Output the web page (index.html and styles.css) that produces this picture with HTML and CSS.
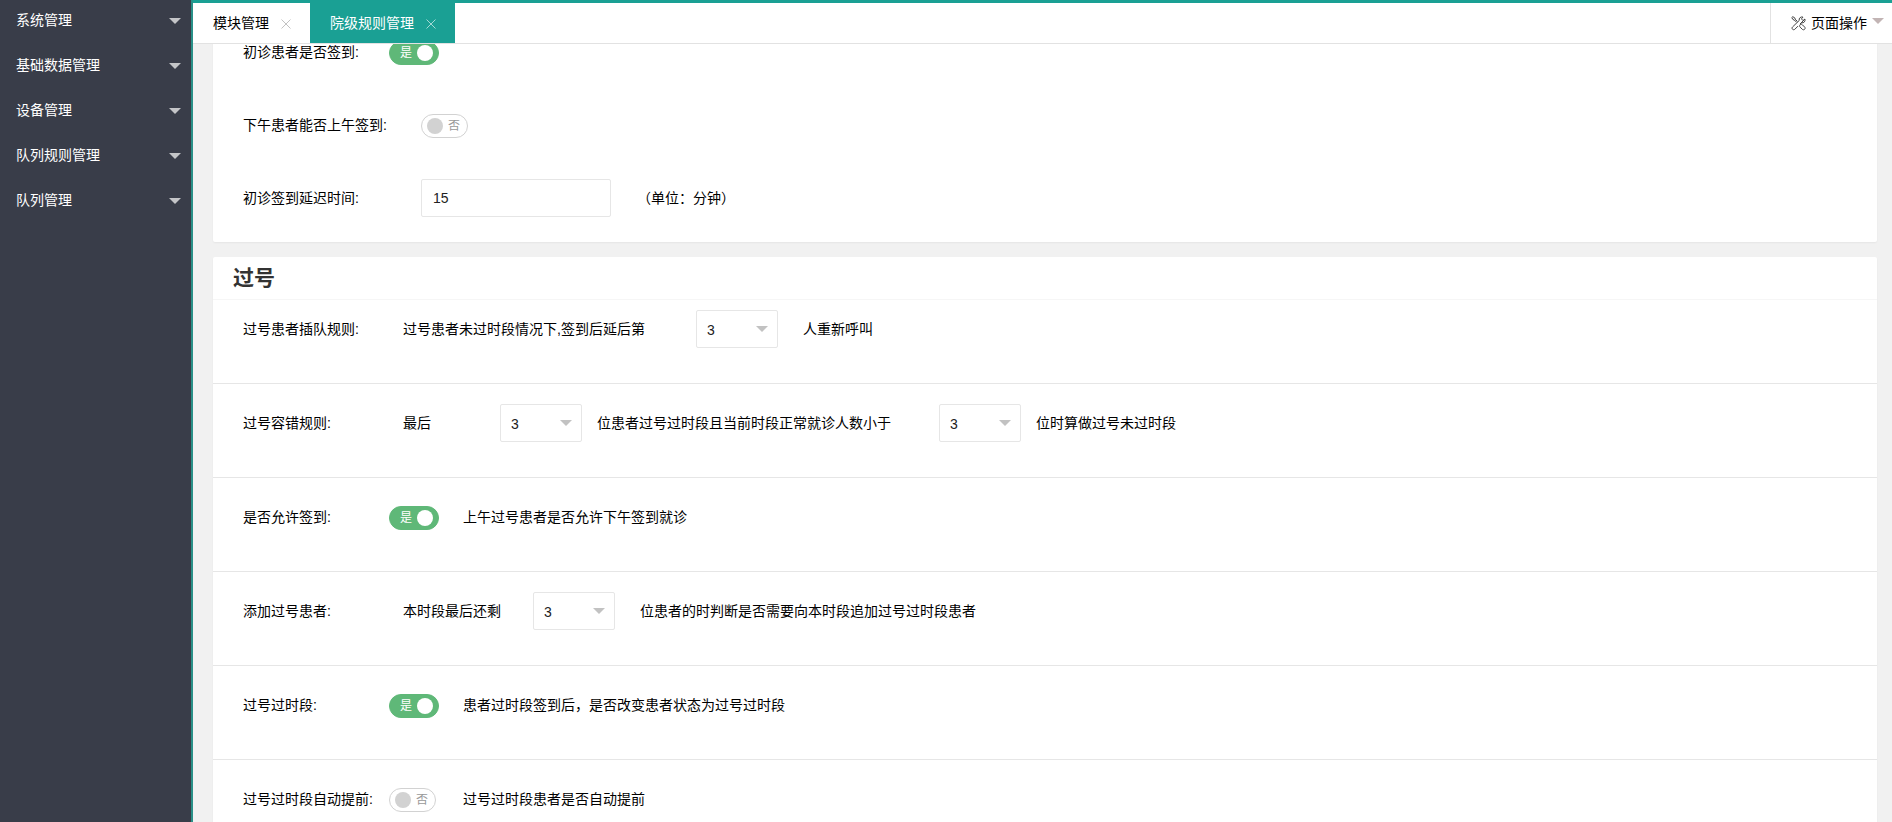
FILE: index.html
```html
<!DOCTYPE html>
<html lang="zh-CN">
<head>
<meta charset="utf-8">
<title>院级规则管理</title>
<link rel="stylesheet" href="styles.css">
</head>
<body>
<div class="app">
  <nav class="sidebar">
    <button class="nav-item" type="button">系统管理<span class="caret"></span></button>
    <button class="nav-item" type="button">基础数据管理<span class="caret"></span></button>
    <button class="nav-item" type="button">设备管理<span class="caret"></span></button>
    <button class="nav-item" type="button">队列规则管理<span class="caret"></span></button>
    <button class="nav-item" type="button">队列管理<span class="caret"></span></button>
  </nav>
  <div class="main">
    <header class="tabs">
      <div class="tab"><a href="#modules">模块管理</a><button class="close" type="button" aria-label="关闭模块管理"><svg width="10" height="10" viewBox="0 0 10 10"><path d="M.5.5l9 9M9.5.5l-9 9"/></svg></button></div>
      <div class="tab tab-active"><a href="#rules">院级规则管理</a><button class="close" type="button" aria-label="关闭院级规则管理"><svg width="10" height="10" viewBox="0 0 10 10"><path d="M.5.5l9 9M9.5.5l-9 9"/></svg></button></div>
      <button class="page-actions" type="button">
        <svg class="tools" width="15" height="15" viewBox="0 0 15 15"><path d="M.8 1.600L1.800.7l2 1.200.4 1.300L6.400 5.400M.8 1.600L2 3.600l1.300.4 2.300 2.300M9.300 8.600c.8-.5 1.500-.4 2.100.2l2.300 2.300c1.300 1.500-.7 3.600-2.300 2.300l-2.300-2.300c-.6-.6-.7-1.300-.2-2.100zM13.900 3l-1.800 1.600-1.700-1.700L12 1.100c-2.300-.7-4.300 1-3.800 3.400L1.500 11c-1.400 1.500.7 3.700 2.300 2.300L7 10.100M9 8.100l1.500-1.300c2.400.5 4.100-1.500 3.400-3.800z"/></svg>
        <span>页面操作</span><span class="caret caret-page"></span>
      </button>
    </header>
    <main class="content">
      <section class="card card-signin">
        <div class="row">
          <span class="label label-switch">初诊患者是否签到:</span>
          <label class="switch switch-on"><span>是</span><input type="checkbox" checked aria-label="初诊患者是否签到"></label>
        </div>
        <div class="row">
          <span class="label label-wide">下午患者能否上午签到:</span>
          <label class="switch"><input type="checkbox" aria-label="下午患者能否上午签到"><span>否</span></label>
        </div>
        <div class="row">
          <label class="label label-wide" for="delay">初诊签到延迟时间:</label>
          <input class="text-input" id="delay" type="text" value="15">
          <span class="unit">（单位：分钟）</span>
        </div>
      </section>

      <section class="card">
        <h2 class="card-title">过号</h2>
        <div class="row row-ruled row-first">
          <label class="label" for="insert">过号患者插队规则:</label>
          <span class="lead-insert">过号患者未过时段情况下,签到后延后第</span>
          <span class="select"><select id="insert"><option>3</option></select></span>
          <span class="after-far">人重新呼叫</span>
        </div>
        <div class="row row-ruled">
          <label class="label" for="last">过号容错规则:</label>
          <span class="lead-last">最后</span>
          <span class="select"><select id="last"><option>3</option></select></span>
          <label class="after-near lead-count" for="count">位患者过号过时段且当前时段正常就诊人数小于</label>
          <span class="select"><select id="count"><option>3</option></select></span>
          <span class="after-near">位时算做过号未过时段</span>
        </div>
        <div class="row row-ruled">
          <span class="label label-switch">是否允许签到:</span>
          <span class="switch-cell"><label class="switch switch-on"><span>是</span><input type="checkbox" checked aria-label="是否允许签到"></label></span>
          <span>上午过号患者是否允许下午签到就诊</span>
        </div>
        <div class="row row-ruled">
          <label class="label" for="remain">添加过号患者:</label>
          <span class="lead-remain">本时段最后还剩</span>
          <span class="select"><select id="remain"><option>3</option></select></span>
          <span class="after-far">位患者的时判断是否需要向本时段追加过号过时段患者</span>
        </div>
        <div class="row row-ruled">
          <span class="label label-switch">过号过时段:</span>
          <span class="switch-cell"><label class="switch switch-on"><span>是</span><input type="checkbox" checked aria-label="过号过时段"></label></span>
          <span>患者过时段签到后，是否改变患者状态为过号过时段</span>
        </div>
        <div class="row row-ruled">
          <span class="label label-switch">过号过时段自动提前:</span>
          <span class="switch-cell"><label class="switch"><input type="checkbox" aria-label="过号过时段自动提前"><span>否</span></label></span>
          <span>过号过时段患者是否自动提前</span>
        </div>
      </section>
    </main>
  </div>
</div>
</body>
</html>
```
FILE: styles.css
```css
* { box-sizing: border-box; }

body {
  margin: 0;
  background: #f1f1f1;
  color: #000;
  font: 14px/38px "Liberation Sans", "Noto Sans CJK SC", sans-serif;
}

button, input, select { font: inherit; color: inherit; }
button { border: 0; background: none; padding: 0; cursor: pointer; }
a { color: inherit; text-decoration: none; }

.app { display: flex; height: 100vh; overflow: hidden; }

.sidebar {
  display: flex;
  flex-direction: column;
  gap: 5px;
  flex: 0 0 193px;
  border-right: 2px solid #2a9088;
  background: #393d49;
}

.nav-item {
  display: flex;
  align-items: center;
  justify-content: space-between;
  padding: 0 10px 0 16px;
  color: #fff;
  line-height: 40px;
}

.caret {
  margin-top: 2px;
  border: 6px solid transparent;
  border-top-color: #c4c5c8;
  border-bottom: 0;
}

.main { display: flex; flex-direction: column; flex: 1; min-width: 0; }

.tabs {
  display: flex;
  flex: none;
  border-top: 3px solid #1aa094;
  border-bottom: 1px solid #e2e2e2;
  background: #fff;
  line-height: 40px;
}

.tab { display: flex; align-items: center; gap: 12px; padding: 0 19px 0 20px; }
.tab-active { background: #1aa094; color: #fff; }
.close { display: flex; padding-top: 1px; color: #c2c2c2; }
.tab-active .close { color: #a3d9d4; }
.close svg { fill: none; stroke: currentColor; }

.page-actions {
  display: flex;
  align-items: center;
  gap: 5px;
  margin-left: auto;
  padding: 0 8px 0 20px;
  border-left: 1px solid #e2e2e2;
}
.tools { fill: none; stroke: #444; stroke-width: 1; }
.caret-page { border-top-color: #c2b4b4; margin: 0 0 4px; }

.content { flex: 1; min-height: 0; overflow: hidden; padding: 0 15px 0 20px; }

.card {
  margin-bottom: 15px;
  border-radius: 2px;
  background: #fff;
  box-shadow: 0 1px 2px rgba(0, 0, 0, .05);
}

/* The list is scrolled so that its first row sits partly under the tab bar. */
.card-signin {
  display: flex;
  flex-direction: column;
  gap: 35px;
  margin-top: -11px;
  padding-bottom: 25px;
}

.card-title {
  margin: 0;
  padding: 0 20px;
  border-bottom: 1px solid #f6f6f6;
  color: #333;
  font-size: 21px;
  line-height: 42px;
}

.row { display: flex; align-items: flex-start; padding-left: 30px; white-space: nowrap; }
.row-ruled { padding-top: 20px; padding-bottom: 35px; border-bottom: 1px solid #e6e6e6; }
.row-first { padding-top: 10px; }

.label { flex: none; width: 160px; }
.label-switch { width: 146px; }
.label-wide { width: 178px; }

.lead-insert { width: 293px; }
.lead-last { width: 97px; }
.lead-count { width: 357px; }
.lead-remain { width: 130px; }
.after-near { padding-left: 15px; }
.after-far { padding-left: 25px; }
.unit { padding-left: 26px; }

.text-input {
  width: 190px;
  height: 38px;
  padding: 0 11px;
  border: 1px solid #e6e6e6;
  border-radius: 2px;
  background: #fff;
  color: #222;
}

.select { display: grid; align-items: center; }
.select select {
  grid-area: 1 / 1;
  width: 82px;
  height: 38px;
  padding: 0 10px;
  border: 1px solid #e6e6e6;
  border-radius: 2px;
  background: #fff;
  color: #222;
  appearance: none;
}
.select::after {
  content: "";
  grid-area: 1 / 1;
  justify-self: end;
  margin-right: 10px;
  border: 6px solid transparent;
  border-top-color: #c2c2c2;
  border-bottom: 0;
  pointer-events: none;
}

.switch-cell { width: 74px; }

.switch {
  display: flex;
  align-items: center;
  gap: 5px;
  width: fit-content;
  height: 24px;
  margin-top: 8px;
  padding: 0 7px 0 5px;
  border: 1px solid #d2d2d2;
  border-radius: 20px;
  background: #fff;
  color: #999;
  font-size: 12px;
  line-height: 22px;
}
.switch input {
  width: 16px;
  height: 16px;
  margin: 0;
  border-radius: 50%;
  background: #d2d2d2;
  appearance: none;
}
.switch-on { padding: 0 5px 0 10px; border-color: #5fb878; background: #5fb878; color: #fff; }
.switch-on input { background: #fff; }
```
